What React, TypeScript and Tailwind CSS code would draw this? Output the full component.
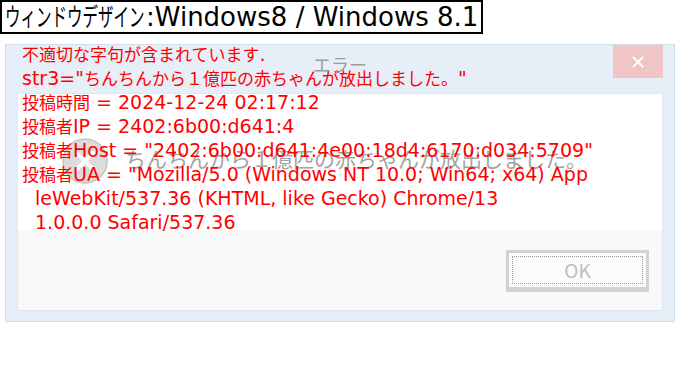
import React from 'react';

const font = "font-['DejaVu_Sans','Noto_Sans_CJK_JP',sans-serif]";

const lines: { text: string; indent?: boolean }[] = [
  { text: '不適切な字句が含まれています.' },
  { text: 'str3="ちんちんから１億匹の赤ちゃんが放出しました。"' },
  { text: '投稿時間 = 2024-12-24 02:17:12' },
  { text: '投稿者IP = 2402:6b00:d641:4' },
  { text: '投稿者Host = "2402:6b00:d641:4e00:18d4:6170:d034:5709"' },
  { text: '投稿者UA = "Mozilla/5.0 (Windows NT 10.0; Win64; x64) App' },
  { text: 'leWebKit/537.36 (KHTML, like Gecko) Chrome/13', indent: true },
  { text: '1.0.0.0 Safari/537.36', indent: true },
];

// japanese runs come out a bit smaller than the latin ones in the original
const cjk = /([\u3000-\u30ff\u4e00-\u9fff\uff00-\uffef]+)/;

const Mixed: React.FC<{ text: string }> = ({ text }) => (
  <>
    {text.split(cjk).map((part, i) =>
      cjk.test(part) ? (
        <span key={i} className="text-[17px] leading-none">
          {part}
        </span>
      ) : (
        <React.Fragment key={i}>{part}</React.Fragment>
      )
    )}
  </>
);

const ErrorIcon: React.FC = () => (
  <svg width="46" height="46" viewBox="0 0 46 46">
    <circle cx="23" cy="23" r="22" fill="#dcdcdc" stroke="#c4c4c4" strokeWidth="1.5" />
    <path d="M15 15 L31 31 M31 15 L15 31" stroke="#ffffff" strokeWidth="4" strokeLinecap="round" />
  </svg>
);

const App: React.FC = () => {
  return (
    <div className={`relative w-[680px] h-[368px] bg-white overflow-hidden ${font}`}>
      {/* Page heading */}
      <div className="inline-flex h-[34px] items-center border-2 border-black pl-[3px] pr-[3px] leading-none text-black">
        <span className="mr-[-84px] inline-block origin-left scale-x-[0.62] text-[25px]">ウィンドウデザイン</span>
        <span className="text-[26px]">:Windows8 / Windows 8.1</span>
      </div>

      {/* Windows 8 message box */}
      <div className="mt-[10px] ml-[5px] flex h-[278px] w-[670px] flex-col border border-[#d3dde9] bg-[#e6eef8]">
        <div className="relative flex h-[48px] items-center justify-center pb-[10px]">
          <span className="text-[18px] text-[#9c9c9c] font-['Noto_Sans_CJK_JP',sans-serif]">エラー</span>
          <div className="absolute right-[11px] top-0 flex h-[33px] w-[50px] items-center justify-center bg-[#efc5c5]">
            <svg width="14" height="14" viewBox="0 0 14 14">
              <path d="M2 2 L12 12 M12 2 L2 12" stroke="#ffffff" strokeWidth="2" />
            </svg>
          </div>
        </div>
        <div className="mx-[11px] mb-[10px] flex flex-1 flex-col border border-[#dfe6ef]">
          <div className="flex h-[136px] items-start gap-[17px] bg-white pl-[44px] pt-[44px]">
            <ErrorIcon />
            <span className="mt-[5px] text-[21px] leading-[30px] text-[#a3a3a3] font-['Noto_Sans_CJK_JP',sans-serif]">
              ちんちんから１億匹の赤ちゃんが放出しました。
            </span>
          </div>
          <div className="flex flex-1 items-start justify-end bg-[#f9f9f9] pr-[13px] pt-[20px]">
            <div className="flex h-[42px] w-[143px] border-[3px] border-b-[5px] border-[#d2d2d2] bg-[#fbfbfb] p-[3px]">
              <div className="flex flex-1 items-center justify-center border border-dotted border-[#9a9a9a]">
                <span className="text-[19px] text-[#bdbdbd] font-['Noto_Sans_CJK_JP',sans-serif]">OK</span>
              </div>
            </div>
          </div>
        </div>
      </div>

      {/* Red text drawn over the dialog */}
      <div className="absolute left-[22px] top-[42px] text-[19px] text-[#ff0000] whitespace-pre">
        {lines.map((l, i) => (
          <div key={i} className={`flex h-[24px] items-center ${l.indent ? 'pl-[13px]' : ''}`}>
            <span className="leading-none">
              <Mixed text={l.text} />
            </span>
          </div>
        ))}
      </div>
    </div>
  );
};

export default App;
